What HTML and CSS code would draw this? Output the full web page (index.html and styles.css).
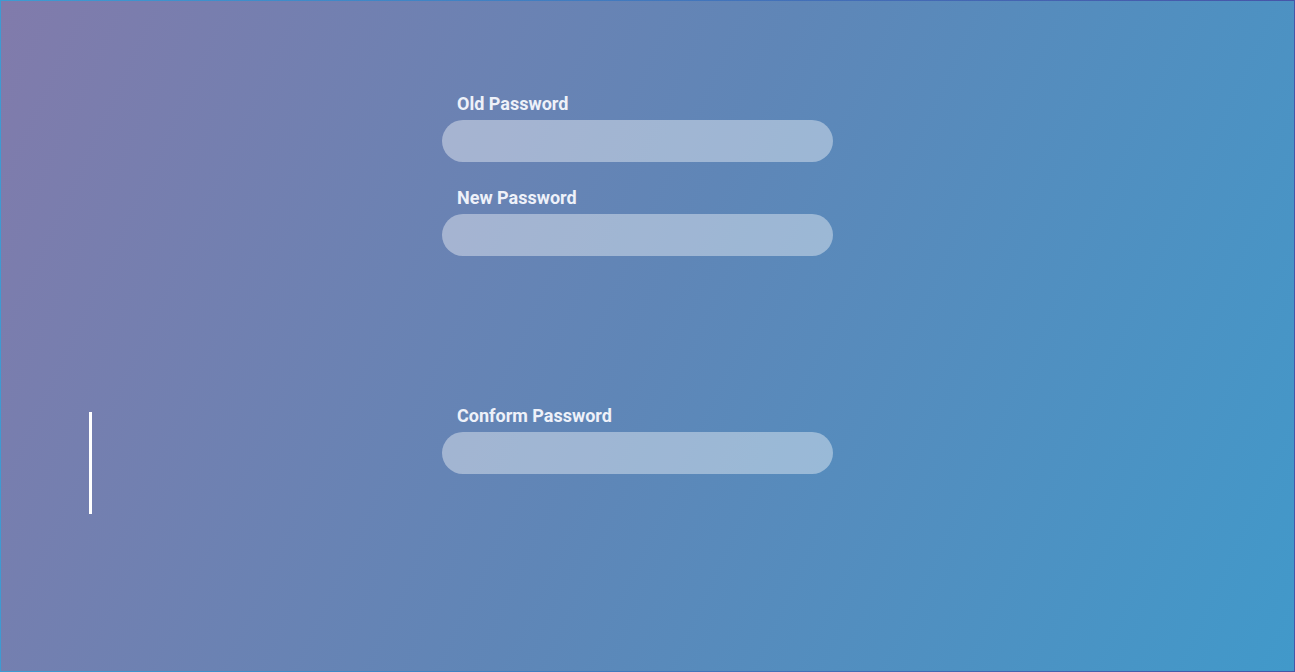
FILE: index.html
```html
<!DOCTYPE html>
<html lang="en">
<head>
<meta charset="utf-8">
<title>Change Password</title>
<link rel="stylesheet" href="styles.css">
</head>
<body>
<div class="page">
  <div class="side">
    <div class="caret"></div>
  </div>
  <form class="form">
    <div class="field">
      <label class="label">Old Password</label>
      <div class="input"></div>
    </div>
    <div class="field">
      <label class="label">New Password</label>
      <div class="input"></div>
    </div>
    <div class="field field-far">
      <label class="label">Conform Password</label>
      <div class="input"></div>
    </div>
  </form>
</div>
</body>
</html>
```
FILE: styles.css
```css
* { box-sizing: border-box; }
html, body { margin: 0; padding: 0; }
body {
  width: 1295px;
  height: 672px;
  overflow: hidden;
  font-family: Roboto, "Liberation Sans", sans-serif;
}
.page {
  width: 1295px;
  height: 672px;
  display: flex;
  border: 1px solid #3f9ad0;
  border-image: linear-gradient(to right, #3d9bd2, #4655a8) 1;
  background: linear-gradient(115deg, #817bab 0%, #5f86b7 50%, #4199ca 100%);
}
.side {
  width: 441px;
  padding-top: 411px;
  padding-left: 88px;
}
.caret {
  width: 3px;
  height: 102px;
  background: #ffffff;
}
.form {
  display: flex;
  flex-direction: column;
  padding-top: 93px;
  width: 391px;
}
.field {
  display: flex;
  flex-direction: column;
  margin-bottom: 26px;
}
.field-far {
  margin-top: 124px;
}
.label {
  height: 20px;
  line-height: 20px;
  margin-bottom: 6px;
  padding-left: 15px;
  font-size: 18px;
  font-weight: 700;
  color: #eef1f9;
}
.input {
  height: 42px;
  border-radius: 21px;
  background: rgba(255, 255, 255, 0.4);
}
```
